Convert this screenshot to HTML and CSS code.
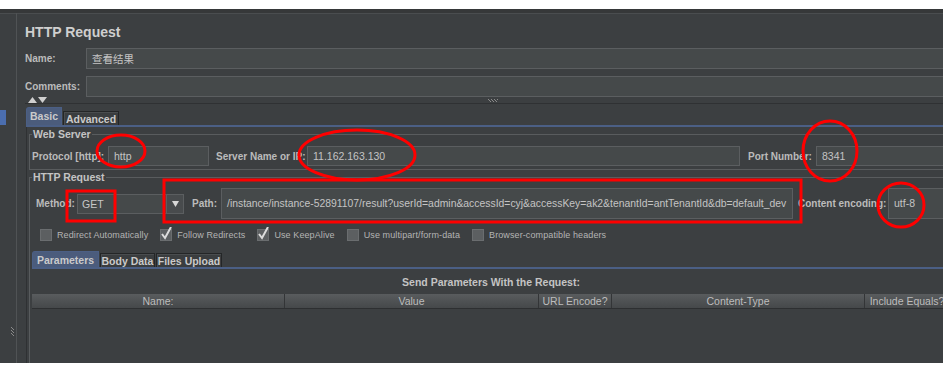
FILE: index.html
```html
<!DOCTYPE html>
<html lang="en">
  <head>
    <meta charset="UTF-8" />
    <meta name="viewport" content="width=device-width, initial-scale=1.0" />
    <title>HTTP Request</title>
    <link rel="stylesheet" href="styles.css">
  </head>
  <body>
    <div class="frame">
      <div class="tree"><div class="treeSel"></div></div>
      <div class="splitter"><span class="gripV"></span></div>
      <div class="panel">
        <h1>HTTP Request</h1>
        <div class="formBox">
          <label>Name:</label><div class="field cjk">查看结果</div>
        </div>
        <div class="formBox comments">
          <label>Comments:</label><div class="field"></div>
        </div>
        <div class="collapse">
          <svg class="arrows" width="19" height="6" viewBox="0 0 19 6">
            <polygon points="0,6 4.5,0 9,6" fill="#d0d0d0" />
            <polygon points="10,0 19,0 14.5,6" fill="#d0d0d0" />
          </svg>
          <span class="gripH"></span>
        </div>
        <div class="tabs top">
          <span class="tab on basic">Basic</span><span class="tab adv">Advanced</span>
        </div>
        <div class="tabBody">
          <fieldset class="webServer">
            <legend>Web Server</legend>
            <div class="row">
              <label class="lProto">Protocol [http]:</label>
              <div class="field fProto">http</div>
              <label class="lServer">Server Name or IP:</label>
              <div class="field fServer">11.162.163.130</div>
              <label class="lPort">Port Number:</label>
              <div class="field grow">8341</div>
            </div>
          </fieldset>
          <fieldset class="httpReq">
            <legend>HTTP Request</legend>
            <div class="row tall">
              <label class="lMethod">Method:</label>
              <div class="select">
                <span class="selVal">GET</span>
                <span class="selBtn">
                  <svg width="7" height="6" viewBox="0 0 7 6"><polygon points="0,0 7,0 3.5,6" fill="#d8d8d8" /></svg>
                </span>
              </div>
              <label class="lPath">Path:</label>
              <div class="field fPath">/instance/instance-52891107/result?userId=admin&amp;accessId=cyj&amp;accessKey=ak2&amp;tenantId=antTenantId&amp;db=default_dev</div>
              <label class="lEnc">Content encoding:</label>
              <div class="field grow">utf-8</div>
            </div>
            <div class="checks">
              <span class="check"><span class="box"></span>Redirect Automatically</span>
              <span class="check"><span class="box"><svg width="13" height="14" viewBox="0 0 13 14"><path d="M2 7 L5 11 L11 0" stroke="#dcdcdc" stroke-width="2" fill="none" /></svg></span>Follow Redirects</span>
              <span class="check"><span class="box"><svg width="13" height="14" viewBox="0 0 13 14"><path d="M2 7 L5 11 L11 0" stroke="#dcdcdc" stroke-width="2" fill="none" /></svg></span>Use KeepAlive</span>
              <span class="check"><span class="box"></span>Use multipart/form-data</span>
              <span class="check"><span class="box"></span>Browser-compatible headers</span>
            </div>
            <div class="tabs sub">
              <span class="tab on params">Parameters</span><span class="tab body">Body Data</span><span class="tab files">Files Upload</span>
            </div>
            <div class="paramBox">
              <div class="caption">Send Parameters With the Request:</div>
              <div class="thead">
                <span class="th cName">Name:</span>
                <span class="th cValue">Value</span>
                <span class="th cUrl">URL Encode?</span>
                <span class="th cType">Content-Type</span>
                <span class="th cEq">Include Equals?</span>
              </div>
            </div>
          </fieldset>
        </div>
      </div>
    </div>

    <!-- red marks drawn on top of the screenshot -->
    <svg class="marks" width="943" height="368" viewBox="0 0 943 368">
      <g fill="none" stroke="#f00" stroke-width="3">
        <ellipse cx="121" cy="151" rx="24" ry="16" />
        <ellipse cx="357" cy="155" rx="58" ry="25" />
        <ellipse cx="830" cy="151" rx="27" ry="30" />
        <rect x="67" y="191" width="48" height="30" />
        <rect x="164" y="180" width="637" height="42" />
        <ellipse cx="901" cy="205" rx="23" ry="22" />
      </g>
    </svg>
  </body>
</html>
```

FILE: styles.css
```css
html, body {
  margin: 0;
  padding: 0;
}
body {
  background: #fff;
  overflow: hidden;
  width: 943px;
  height: 368px;
  position: relative;
  font-family: 'Liberation Sans', Arial, sans-serif;
  color: #bbbbbb;
}
.frame {
  box-sizing: border-box;
  margin-top: 9px;
  width: 960px;
  height: 354px;
  display: flex;
  background: #3c3f41;
  border-top: 4px solid #363839;
  box-shadow: inset 0 1px #4a4d4f;
}
.tree {
  width: 7px;
}
.treeSel {
  margin-top: 97px;
  width: 6px;
  height: 15px;
  background: #4b6eaf;
}
.splitter {
  box-sizing: border-box;
  width: 10px;
  border-right: 1px solid #505355;
  display: flex;
  flex-direction: column;
  justify-content: flex-end;
}
.gripV {
  width: 3px;
  height: 9px;
  margin: 0 0 27px 4px;
  background-image: repeating-linear-gradient(45deg, #8a8a8a 0 0.7px, transparent 0.7px 2px);
}
.panel {
  flex: 1;
  padding-left: 8px;
  display: flex;
  flex-direction: column;
  min-width: 0;
}
h1 {
  margin: 9px 0 0;
  font-size: 14px;
  line-height: 20px;
  font-weight: bold;
  color: #cfcfcf;
}
label {
  font-size: 10px;
  font-weight: bold;
  color: #bbbbbb;
  white-space: nowrap;
}
.formBox {
  display: flex;
  align-items: center;
  height: 21px;
  margin-top: 6px;
}
.formBox label {
  width: 61px;
}
.formBox.comments {
  margin-top: 7px;
}
.field {
  box-sizing: border-box;
  height: 20px;
  background: #45494a;
  border: 1px solid #5b5e60;
  padding-left: 5px;
  font-size: 10.5px;
  line-height: 18px;
  color: #c4c4c4;
  white-space: nowrap;
  overflow: hidden;
}
.formBox .field {
  flex: 1;
  height: 21px;
  line-height: 19px;
}
.cjk {
  font-family: 'Noto Sans CJK SC', 'Liberation Sans', sans-serif;
}
.collapse {
  height: 6px;
  border-bottom: 1px solid #2f3133;
  display: flex;
  align-items: flex-end;
}
.arrows {
  margin-left: 3px;
  display: block;
}
.gripH {
  width: 10px;
  height: 3px;
  margin: 0 0 1px 441px;
  background-image: repeating-linear-gradient(45deg, #8a8a8a 0 0.7px, transparent 0.7px 2px);
}

/* tabs */
.tabs {
  display: flex;
  align-items: flex-end;
  border-bottom: 2px solid #4b5f85;
}
.tabs.top {
  margin: 3px 0 0 1px;
  height: 18px;
}
.tab {
  box-sizing: border-box;
  font-size: 10.5px;
  font-weight: bold;
  color: #cacaca;
  text-align: center;
  border: 1px solid #242627;
  border-bottom: none;
  background: #3a3d3f;
  box-shadow: inset 1px 1px #4a4d4f;
  margin-left: 1px;
}
.tab.on {
  margin-left: 0;
  background: #4b5c7c;
  border-color: #4b5f85;
  border-top-left-radius: 3px;
  box-shadow: none;
}
.basic {
  width: 36px;
  height: 18px;
  line-height: 17px;
}
.adv {
  width: 56px;
  height: 14px;
  line-height: 14px;
}
.tabBody {
  flex: 1;
  margin-left: 1px;
  border-left: 1px solid #2f3133;
  padding-left: 2px;
  display: flex;
  flex-direction: column;
}
fieldset {
  margin: 1px 0 0;
  border: 1px solid #595c5e;
  padding: 6px 2px 3px;
  min-width: 0;
}
legend {
  font-size: 10.5px;
  font-weight: bold;
  line-height: 12px;
  color: #c4c4c4;
  padding: 0 1px;
}
.row {
  display: flex;
  align-items: center;
  height: 20px;
}
.lProto {
  width: 76px;
}
.fProto {
  width: 101px;
}
.lServer {
  width: 91px;
  margin-left: 7px;
}
.fServer {
  width: 433px;
}
.lPort {
  width: 68px;
  margin-left: 8px;
}
.grow {
  flex: 1;
}
.httpReq {
  flex: 1;
  padding-top: 5px;
  border-bottom: none;
}
.row.tall {
  height: 31px;
}
.row.tall .field {
  height: 31px;
  line-height: 29px;
}
.lMethod {
  width: 41px;
  margin-left: 4px;
}
.select {
  box-sizing: border-box;
  width: 107px;
  height: 20px;
  display: flex;
  background: #45494a;
  border: 1px solid #5b5e60;
}
.selVal {
  flex: 1;
  padding-left: 4px;
  font-size: 10.5px;
  line-height: 18px;
  color: #c8c8c8;
}
.selBtn {
  width: 16px;
  border-left: 1px solid #5b5e60;
  display: flex;
  align-items: center;
  justify-content: center;
  background: #484b4d;
}
.lPath {
  width: 29px;
  margin-left: 8px;
}
.fPath {
  width: 572px;
  font-size: 10.4px;
}
.lEnc {
  width: 90px;
  margin-left: 5px;
}

/* checkboxes */
.checks {
  display: flex;
  align-items: center;
  height: 12px;
  margin-top: 10px;
  padding-left: 8px;
}
.check {
  display: flex;
  align-items: center;
  margin-right: 12px;
  font-size: 9px;
  letter-spacing: 0.1px;
  color: #b4b4b4;
  white-space: nowrap;
}
.box {
  box-sizing: border-box;
  width: 12px;
  height: 12px;
  margin-right: 5px;
  background: #5c5f61;
  border: 1px solid #6a6d6f;
  position: relative;
}
.box svg {
  position: absolute;
  left: -1px;
  top: -3px;
}

/* parameter tabs */
.tabs.sub {
  margin-top: 10px;
  height: 16px;
}
.params {
  width: 67px;
  height: 16px;
  line-height: 16px;
}
.body {
  width: 55px;
  height: 14px;
  line-height: 14px;
}
.files {
  width: 66px;
  height: 14px;
  line-height: 14px;
}
.paramBox {
  width: 918px;
}
.caption {
  margin-top: 6px;
  font-size: 10.5px;
  font-weight: bold;
  line-height: 14px;
  text-align: center;
  color: #c4c4c4;
}
.thead {
  display: flex;
  margin-top: 5px;
  height: 14px;
  border-bottom: 1px solid #2d2f31;
}
.th {
  box-sizing: border-box;
  font-size: 10.5px;
  line-height: 14px;
  text-align: center;
  color: #bdbdbd;
  background: linear-gradient(#595c5e, #45484a);
  border-right: 1px solid #333537;
  white-space: nowrap;
}
.cName {
  width: 253px;
}
.cValue {
  width: 254px;
}
.cUrl {
  width: 73px;
}
.cType {
  width: 253px;
}
.cEq {
  width: 85px;
}
.marks {
  position: absolute;
  left: 0;
  top: 0;
  pointer-events: none;
}
```
